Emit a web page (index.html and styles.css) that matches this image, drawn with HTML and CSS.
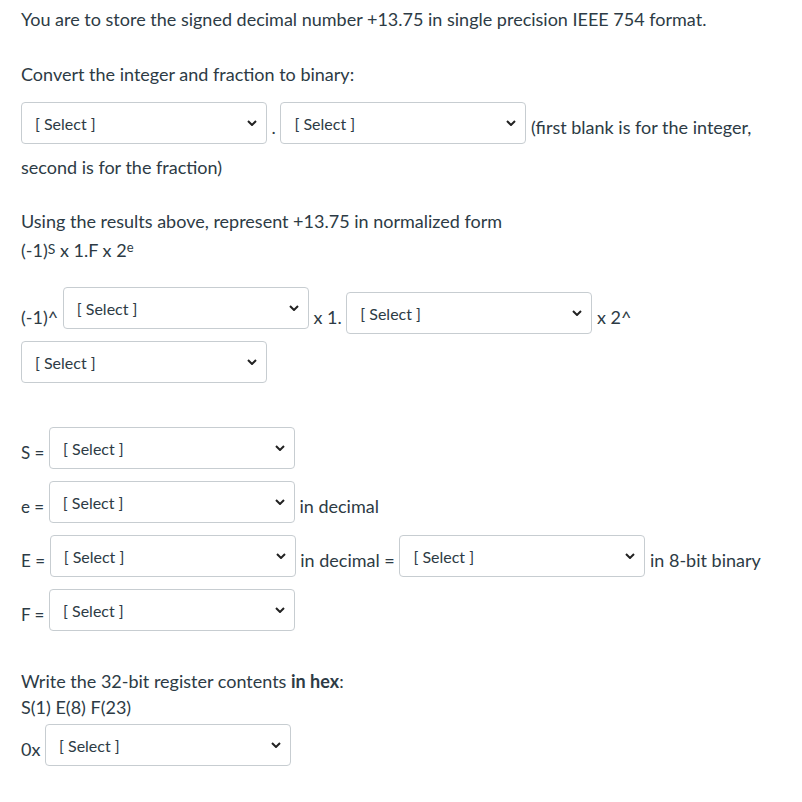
FILE: index.html
```html
<!DOCTYPE html>
<html>
<head>
<meta charset="utf-8">
<link rel="stylesheet" href="styles.css">
</head>
<body>
<div class="page">
  <p class="intro">You are to store the signed decimal number +13.75 in single precision IEEE 754 format.</p>

  <p class="prompt">Convert the integer and fraction to binary:</p>

  <p class="binary"><span class="sel"><span class="sel-text">[ Select ]</span><svg class="chev" viewBox="0 0 10 6"><path d="M1 1 L5 5 L9 1"/></svg></span> <span class="dot">.</span> <span class="sel"><span class="sel-text">[ Select ]</span><svg class="chev" viewBox="0 0 10 6"><path d="M1 1 L5 5 L9 1"/></svg></span> (first blank is for the integer, second is for the fraction)</p>

  <p class="norm">Using the results above, represent +13.75 in normalized form</p>
  <p class="norm-formula">(-1)<sup>S</sup> x 1.F x 2<sup class="sup-e">e</sup></p>

  <p class="formula">(-1)^ <span class="sel sel-raised"><span class="sel-text">[ Select ]</span><svg class="chev" viewBox="0 0 10 6"><path d="M1 1 L5 5 L9 1"/></svg></span> x 1. <span class="sel sel-tight"><span class="sel-text">[ Select ]</span><svg class="chev" viewBox="0 0 10 6"><path d="M1 1 L5 5 L9 1"/></svg></span> x 2^ <span class="sel"><span class="sel-text">[ Select ]</span><svg class="chev" viewBox="0 0 10 6"><path d="M1 1 L5 5 L9 1"/></svg></span></p>

  <div class="fields">
    <p class="field"><span class="small">S =</span> <span class="sel"><span class="sel-text">[ Select ]</span><svg class="chev" viewBox="0 0 10 6"><path d="M1 1 L5 5 L9 1"/></svg></span></p>
    <p class="field"><span class="small">e =</span> <span class="sel"><span class="sel-text">[ Select ]</span><svg class="chev" viewBox="0 0 10 6"><path d="M1 1 L5 5 L9 1"/></svg></span> in decimal</p>
    <p class="field"><span class="small">E =</span> <span class="sel"><span class="sel-text">[ Select ]</span><svg class="chev" viewBox="0 0 10 6"><path d="M1 1 L5 5 L9 1"/></svg></span> in decimal = <span class="sel"><span class="sel-text">[ Select ]</span><svg class="chev" viewBox="0 0 10 6"><path d="M1 1 L5 5 L9 1"/></svg></span> in 8-bit binary</p>
    <p class="field"><span class="small">F =</span> <span class="sel"><span class="sel-text">[ Select ]</span><svg class="chev" viewBox="0 0 10 6"><path d="M1 1 L5 5 L9 1"/></svg></span></p>
  </div>

  <p class="hex">Write the 32-bit register contents <strong>in hex</strong>:<br>S(1) E(8) F(23)</p>

  <p class="hex-row">0x <span class="sel"><span class="sel-text">[ Select ]</span><svg class="chev" viewBox="0 0 10 6"><path d="M1 1 L5 5 L9 1"/></svg></span></p>
</div>
</body>
</html>
```

FILE: styles.css
```css
html, body {
  margin: 0;
  padding: 0;
  background: #ffffff;
}

.page {
  padding: 6px 21px 0 21px;
  width: 760px;
  font-family: Lato, "Open Sans", sans-serif;
  font-size: 18px;
  line-height: 26px;
  color: #2d3b45;
}

p {
  margin: 0;
}

.intro {
  margin-bottom: 29px;
}

.prompt {
  margin-bottom: 15px;
}

.binary {
  margin-bottom: 28px;
}

.norm-formula {
  margin-top: 3px;
  margin-bottom: 24px;
}

.formula {
  margin-bottom: 34px;
}

.field {
  margin-bottom: 2px;
}

.hex {
  margin-top: 27px;
  margin-bottom: 4px;
}

sup {
  font-size: 14px;
  line-height: 0;
  vertical-align: 3px;
}

.sup-e {
  font-size: 13px;
  vertical-align: 5px;
}

.small {
  font-size: 17px;
}

.sel {
  display: inline-flex;
  align-items: center;
  justify-content: space-between;
  box-sizing: border-box;
  width: 246px;
  height: 42px;
  padding: 0 9px 0 13px;
  border: 1px solid #c7cdd1;
  border-radius: 4px;
  background: #ffffff;
  font-size: 16px;
  line-height: 19px;
  color: #2d3b45;
  vertical-align: 4px;
  margin-bottom: 10px;
}

.sel-raised {
  vertical-align: 9px;
}

.sel-tight {
  margin-bottom: 7px;
}

.chev {
  width: 10px;
  height: 6px;
  fill: none;
  stroke: #222222;
  stroke-width: 2;
}
```
